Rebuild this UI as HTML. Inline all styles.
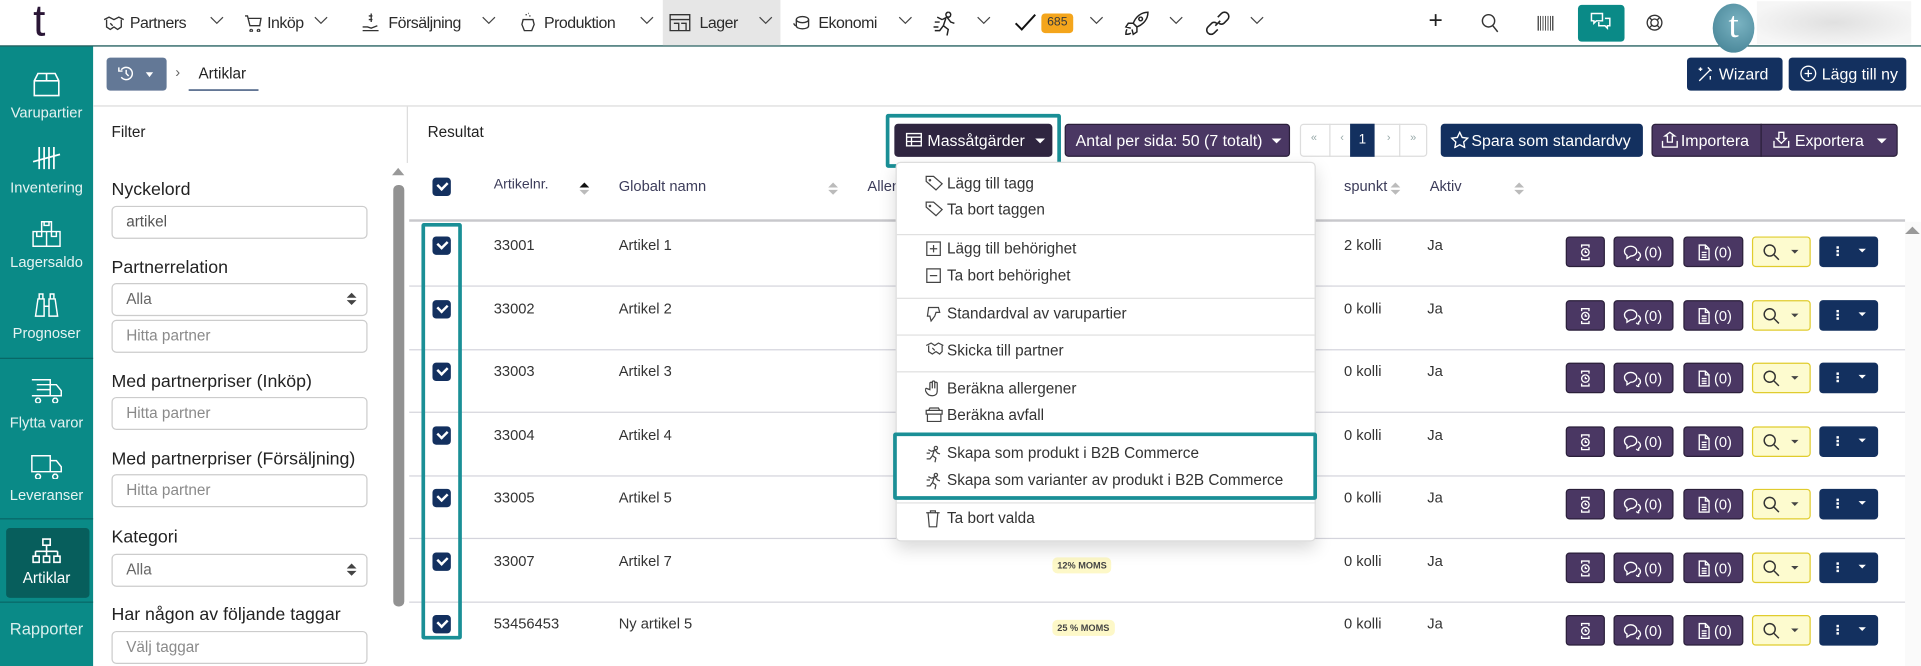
<!DOCTYPE html>
<html><head><meta charset="utf-8">
<style>
html,body{margin:0;padding:0;width:1921px;height:666px;overflow:hidden;background:#fff}
#s{position:absolute;left:0;top:0;width:1568px;height:544px;transform:scale(1.22513);transform-origin:0 0;font-family:"Liberation Sans",sans-serif;color:#333;font-size:12.5px}
.a{position:absolute}
.nav{font-size:13px;color:#2b2b2b;top:11px;letter-spacing:-0.4px}
.chev{position:absolute;top:13px;width:12px;height:8px}
.sb{position:absolute;left:0;width:76px;text-align:center;color:#e6f3f2;font-size:12px}
.lbl{position:absolute;left:91px;font-size:14.5px;color:#222}
.inp{position:absolute;left:91px;width:209px;height:27px;border:1px solid #ccc;border-radius:4px;background:#fff;box-sizing:border-box;padding:5px 11px;color:#8a8a8a;font-size:12.5px}
.cb{position:absolute;width:15px;height:15px;background:#13305f;border-radius:3px}
.cb:after{content:"";position:absolute;left:4px;top:3px;width:6px;height:3.5px;border-left:2px solid #fff;border-bottom:2px solid #fff;transform:rotate(-45deg)}
.row{position:absolute;left:334px;width:1221px;height:52px;border-bottom:1px solid #d4d4dc}
.row .t{position:absolute;top:12px;font-size:12px;color:#333}
.btn{position:absolute;top:12px;height:25px;border-radius:3px;box-sizing:border-box;color:#fff;font-size:12px}
.pb{background:#4a3763;border:1px solid #2a1f3a}
.mi{position:absolute;left:41px;font-size:12.5px;color:#333;white-space:nowrap}
.mi svg{position:absolute;left:-18px;top:0}
.dv{position:absolute;left:0;right:0;height:1px;background:#e0e0e0}
.hd{position:absolute;top:145px;font-size:11.5px;color:#3c3c5a}
.sort{position:absolute;width:8px;height:12px}
.badge{position:absolute;top:16px;background:#fdf8c8;border-radius:4px;font-size:7.5px;font-weight:bold;color:#444;padding:2px 4px}
</style></head><body><div id="s">

<!-- top bar -->
<div class="a" style="left:0;top:0;width:1568px;height:38px;background:#fff;border-bottom:1.5px solid #0e4f4f;box-sizing:border-box"></div>
<div class="a" style="left:27px;top:-4px;font-size:36px;color:#2a1636">t</div>
<div class="a" style="left:541px;top:0;width:96px;height:37px;background:#e6e6e6"></div>

<svg class="a" style="left:84px;top:12px" width="18" height="14" viewBox="0 0 18 14" fill="none" stroke="#333" stroke-width="1.1"><path d="M1 4l4-2 4 2 4-2 4 2M3 4v6l3 2 3-2 3 2 3-2V4M6 7l2 2"/></svg>
<span class="a nav" style="left:106px">Partners</span>
<svg class="chev" style="left:171px" viewBox="0 0 12 8"><path d="M1 1l5 5 5-5" stroke="#444" fill="none"/></svg>
<svg class="a" style="left:199px;top:11px" width="15" height="15" viewBox="0 0 15 15" fill="none" stroke="#333" stroke-width="1.1"><path d="M1 2h2l2 8h8l1-6H4M6 13a1 1 0 1 0 .1 0M12 13a1 1 0 1 0 .1 0"/></svg>
<span class="a nav" style="left:218px">Inköp</span>
<svg class="chev" style="left:256px" viewBox="0 0 12 8"><path d="M1 1l5 5 5-5" stroke="#444" fill="none"/></svg>
<svg class="a" style="left:295px;top:10px" width="16" height="17" viewBox="0 0 16 17" fill="none" stroke="#333" stroke-width="1.1"><path d="M8 1v7M6 3h3M6 6h3M1 12h4l3 1 5-2M1 15h13"/></svg>
<span class="a nav" style="left:317px">Försäljning</span>
<svg class="chev" style="left:393px" viewBox="0 0 12 8"><path d="M1 1l5 5 5-5" stroke="#444" fill="none"/></svg>
<svg class="a" style="left:424px;top:10px" width="14" height="17" viewBox="0 0 14 17" fill="none" stroke="#333" stroke-width="1.1"><path d="M3 6h8l1 4-2 5H4l-2-5zM5 2h1M8 3h1M7 1h0.5"/></svg>
<span class="a nav" style="left:444px">Produktion</span>
<svg class="chev" style="left:522px" viewBox="0 0 12 8"><path d="M1 1l5 5 5-5" stroke="#444" fill="none"/></svg>
<svg class="a" style="left:546px;top:11px" width="18" height="15" viewBox="0 0 18 15" fill="none" stroke="#333" stroke-width="1.1"><path d="M1 1h16v13H1zM1 5h16M4 8h4v6M10 8h4v6"/></svg>
<span class="a nav" style="left:571px">Lager</span>
<svg class="chev" style="left:619px" viewBox="0 0 12 8"><path d="M1 1l5 5 5-5" stroke="#444" fill="none"/></svg>
<svg class="a" style="left:647px;top:12px" width="14" height="13" viewBox="0 0 14 13" fill="none" stroke="#333" stroke-width="1.1"><ellipse cx="8" cy="4" rx="5" ry="2.5"/><path d="M3 4v5c0 1.5 2 2.5 5 2.5s5-1 5-2.5V4M1 7c0 1 1 2 2 2"/></svg>
<span class="a nav" style="left:668px">Ekonomi</span>
<svg class="chev" style="left:733px" viewBox="0 0 12 8"><path d="M1 1l5 5 5-5" stroke="#444" fill="none"/></svg>
<svg class="a" style="left:761px;top:8px" width="22" height="22" viewBox="0 0 22 22" fill="none" stroke="#222" stroke-width="1.2"><path d="M13 2a2 2 0 1 0 .1 0M8 8l4-2 3 4 3 1M11 7l-2 6 4 3-1 5M9 13l-3 4H2M4 6l4 2M2 10h4M1 14h4"/></svg>
<svg class="chev" style="left:797px" viewBox="0 0 12 8"><path d="M1 1l5 5 5-5" stroke="#444" fill="none"/></svg>
<svg class="a" style="left:828px;top:11px" width="18" height="15" viewBox="0 0 18 15"><path d="M1 8l5 5L17 1" stroke="#111" stroke-width="1.6" fill="none"/></svg>
<div class="a" style="left:850px;top:11px;width:26px;height:16px;background:#f4a51c;border-radius:3px;font-size:10px;color:#3a3a3a;text-align:center;line-height:16px">685</div>
<svg class="chev" style="left:889px" viewBox="0 0 12 8"><path d="M1 1l5 5 5-5" stroke="#444" fill="none"/></svg>
<svg class="a" style="left:917px;top:8px" width="22" height="22" viewBox="0 0 22 22" fill="none" stroke="#222" stroke-width="1.2"><path d="M20 2c-6 0-10 4-12 9l3 3c5-2 9-6 9-12zM8 11l-4 0-2 3 4 1M11 14v4l-3 2-1-4M14 6a1.5 1.5 0 1 0 .1 0M3 16c-1 1-1 3-1 4 1 0 3 0 4-1"/></svg>
<svg class="chev" style="left:954px" viewBox="0 0 12 8"><path d="M1 1l5 5 5-5" stroke="#444" fill="none"/></svg>
<svg class="a" style="left:983px;top:8px" width="22" height="22" viewBox="0 0 22 22" fill="none" stroke="#222" stroke-width="1.3"><path d="M9 13l4-4M11 6l3-3a3 3 0 0 1 5 5l-3 3a3 3 0 0 1-4 0M11 16l-3 3a3 3 0 0 1-5-5l3-3a3 3 0 0 1 4 0"/></svg>
<svg class="chev" style="left:1020px" viewBox="0 0 12 8"><path d="M1 1l5 5 5-5" stroke="#444" fill="none"/></svg>

<div class="a" style="left:1166px;top:6px;font-size:20px;color:#222">+</div>
<svg class="a" style="left:1209px;top:11px" width="15" height="16" viewBox="0 0 15 16" fill="none" stroke="#333" stroke-width="1.2"><circle cx="6" cy="6" r="5"/><path d="M9.5 10l4 5"/></svg>
<div class="a" style="left:1255px;top:13px;width:13px;height:12px;background:repeating-linear-gradient(90deg,#555 0 1px,#fff 1px 2px)"></div>
<div class="a" style="left:1288px;top:4px;width:38px;height:30px;background:#0a8a87;border-radius:3px"></div>
<svg class="a" style="left:1297px;top:9px" width="20" height="20" viewBox="0 0 20 20" fill="none" stroke="#fff" stroke-width="1.2"><path d="M2 2h9v6H6l-2 2V8H2zM8 9v3h5l2 2v-2h2V6h-4"/></svg>
<svg class="a" style="left:1343px;top:11px" width="15" height="15" viewBox="0 0 15 15" fill="none" stroke="#333" stroke-width="1.1"><circle cx="7.5" cy="7.5" r="6"/><circle cx="7.5" cy="7.5" r="3"/><path d="M3.3 3.3l2 2M11.7 3.3l-2 2M3.3 11.7l2-2M11.7 11.7l-2-2"/></svg>
<div class="a" style="left:1398px;top:3px;width:34px;height:40px;border-radius:50%;background:radial-gradient(circle at 60% 40%,#7ab3c2,#3f7d90);color:#fff;font-size:30px;text-align:center;line-height:36px;font-family:'Liberation Serif',serif">t</div>
<div class="a" style="left:1434px;top:1px;width:126px;height:35px;background:radial-gradient(ellipse at 50% 50%,#e0e0e0,#f6f6f6 80%)"></div>

<!-- sidebar -->
<div class="a" style="left:0;top:38px;width:76px;height:506px;background:#0a8a87"></div>
<svg class="a" style="left:27px;top:58px" width="22" height="22" viewBox="0 0 22 22" fill="none" stroke="#fff" stroke-width="1.3"><path d="M4 2h14l3 6v12H1V8zM1 8h20M11 2v6"/></svg>
<div class="sb" style="top:85px">Varupartier</div>
<svg class="a" style="left:26px;top:119px" width="24" height="20" viewBox="0 0 24 20" fill="none" stroke="#fff" stroke-width="1.4"><path d="M6 1v18M10 1v18M14 1v18M18 1v18M1 13l22-6"/></svg>
<div class="sb" style="top:146px">Inventering</div>
<svg class="a" style="left:26px;top:180px" width="24" height="22" viewBox="0 0 24 22" fill="none" stroke="#fff" stroke-width="1.2"><path d="M8 1h8v8H8zM1 9h22v12H1zM12 9v12M10 1v3h4V1M4 9v4h4V9M16 9v4h4V9"/></svg>
<div class="sb" style="top:207px">Lagersaldo</div>
<svg class="a" style="left:27px;top:238px" width="22" height="22" viewBox="0 0 22 22" fill="none" stroke="#fff" stroke-width="1.2"><path d="M2 20l2-14h5v14zM13 20V6h5l2 14zM5 6V2h3v4M14 6V2h3v4M9 12h4"/></svg>
<div class="sb" style="top:265px">Prognoser</div>
<div class="a" style="left:0;top:292px;width:76px;height:1px;background:#096766"></div>
<svg class="a" style="left:25px;top:307px" width="26" height="22" viewBox="0 0 26 22" fill="none" stroke="#fff" stroke-width="1.2"><path d="M1 3h15v13H1M5 7h11M5 11h11M16 7h5l4 5v4h-9M6 18a2 2 0 1 0 .1 0M20 18a2 2 0 1 0 .1 0"/></svg>
<div class="sb" style="top:338px">Flytta varor</div>
<svg class="a" style="left:25px;top:369px" width="26" height="22" viewBox="0 0 26 22" fill="none" stroke="#fff" stroke-width="1.2"><path d="M1 3h15v13H1zM16 7h5l4 5v4h-9M6 18a2 2 0 1 0 .1 0M20 18a2 2 0 1 0 .1 0"/></svg>
<div class="sb" style="top:397px">Leveranser</div>
<div class="a" style="left:0;top:423px;width:76px;height:1px;background:#096766"></div>
<div class="a" style="left:5px;top:431px;width:68px;height:57px;background:#075e5c;border-radius:3px"></div>
<svg class="a" style="left:26px;top:439px" width="24" height="22" viewBox="0 0 24 22" fill="none" stroke="#fff" stroke-width="1.3"><path d="M9 1h6v5H9zM12 6v5M3 11h18M3 11v4M12 11v4M21 11v4M1 15h5v5H1zM9.5 15h5v5h-5zM18 15h5v5h-5z"/></svg>
<div class="sb" style="top:465px;color:#fff;font-size:12.5px">Artiklar</div>
<div class="a" style="left:0;top:491px;width:76px;height:1px;background:#096766"></div>
<div class="sb" style="top:506px;font-size:13.5px;color:#d9efed">Rapporter</div>

<!-- breadcrumb row -->
<div class="a" style="left:87px;top:47px;width:49px;height:27px;background:#637896;border-radius:3px"></div>
<svg class="a" style="left:96px;top:53px" width="14" height="14" viewBox="0 0 14 14" fill="none" stroke="#fff" stroke-width="1.2"><path d="M3 4a5 5 0 1 1 0 6M1 2v3h3M7 4v3l2 2"/></svg>
<div class="a" style="left:119px;top:59px;border:3px solid transparent;border-top:4px solid #fff"></div>
<div class="a" style="left:143px;top:52px;color:#666;font-size:12px">›</div>
<div class="a" style="left:162px;top:53px;font-size:12.5px;color:#222">Artiklar</div>
<div class="a" style="left:154px;top:73px;width:57px;height:1px;background:#13305f"></div>
<div class="a" style="left:1377px;top:47px;width:78px;height:27px;background:#13305f;border-radius:3px;color:#fff;font-size:13px;line-height:27px"><span style="position:absolute;left:26px">Wizard</span></div>
<svg class="a" style="left:1385px;top:53px" width="14" height="14" viewBox="0 0 14 14" fill="none" stroke="#fff" stroke-width="1.1"><path d="M2 13L11 4M9 2l3 3M3 2v3M1.5 3.5h3M11 9v3"/></svg>
<div class="a" style="left:1460px;top:47px;width:96px;height:27px;background:#13305f;border-radius:3px;color:#fff;font-size:13px;line-height:27px"><span style="margin-left:27px">Lägg till ny</span></div>
<svg class="a" style="left:1469px;top:53px" width="14" height="14" viewBox="0 0 14 14" fill="none" stroke="#fff" stroke-width="1.1"><circle cx="7" cy="7" r="6"/><path d="M7 4v6M4 7h6"/></svg>
<div class="a" style="left:76px;top:86px;width:1492px;height:1px;background:#dcdcdc"></div>

<!-- filter -->
<div class="a" style="left:332px;top:87px;width:1px;height:46px;background:#dcdcdc"></div>
<div class="a" style="left:91px;top:101px;font-size:12.5px;color:#222">Filter</div>
<div class="a" style="left:320px;top:137px;border:5px solid transparent;border-bottom:6px solid #999;border-top:0"></div>
<div class="a" style="left:321px;top:151px;width:9px;height:344px;background:#929292;border-radius:4px"></div>
<div class="lbl" style="top:147px">Nyckelord</div>
<div class="inp" style="top:168px;color:#555">artikel</div>
<div class="lbl" style="top:211px">Partnerrelation</div>
<div class="inp" style="top:231px;color:#666">Alla</div>
<svg class="a" style="left:283px;top:238px" width="8" height="12" viewBox="0 0 8 12"><path d="M0 5l4-4 4 4zM0 7l4 4 4-4z" fill="#444"/></svg>
<div class="inp" style="top:261px">Hitta partner</div>
<div class="lbl" style="top:304px">Med partnerpriser (Inköp)</div>
<div class="inp" style="top:324px">Hitta partner</div>
<div class="lbl" style="top:367px">Med partnerpriser (Försäljning)</div>
<div class="inp" style="top:387px">Hitta partner</div>
<div class="lbl" style="top:431px">Kategori</div>
<div class="inp" style="top:452px;color:#666">Alla</div>
<svg class="a" style="left:283px;top:459px" width="8" height="12" viewBox="0 0 8 12"><path d="M0 5l4-4 4 4zM0 7l4 4 4-4z" fill="#444"/></svg>
<div class="lbl" style="top:494px">Har någon av följande taggar</div>
<div class="inp" style="top:515px">Välj taggar</div>

<!-- results header -->
<div class="a" style="left:349px;top:101px;font-size:12.5px;color:#222">Resultat</div>
<div class="a" style="left:869px;top:101px;width:184px;height:27px;background:#4a3763;border:1px solid #2a1f3a;box-sizing:border-box;border-radius:3px;color:#fff;font-size:13px;line-height:25px"><span style="margin-left:8px">Antal per sida: 50 (7 totalt)</span></div>
<div class="a" style="left:1038px;top:113px;border:4px solid transparent;border-top:4px solid #fff"></div>
<div class="a" style="left:1061px;top:101px;width:104px;height:27px;border:1px solid #ddd;border-radius:3px;box-sizing:border-box"></div>
<div class="a" style="left:1070px;top:107px;font-size:9px;color:#9aa">«</div>
<div class="a" style="left:1085px;top:101px;width:1px;height:27px;background:#ddd"></div>
<div class="a" style="left:1094px;top:107px;font-size:9px;color:#9aa">‹</div>
<div class="a" style="left:1102px;top:101px;width:20px;height:27px;background:#13305f;color:#fff;font-size:11px;text-align:center;line-height:27px">1</div>
<div class="a" style="left:1132px;top:107px;font-size:9px;color:#9aa">›</div>
<div class="a" style="left:1142px;top:101px;width:1px;height:27px;background:#ddd"></div>
<div class="a" style="left:1151px;top:107px;font-size:9px;color:#9aa">»</div>
<div class="a" style="left:1176px;top:101px;width:165px;height:27px;background:#13305f;border-radius:3px;color:#fff;font-size:13px;line-height:27px"><span style="margin-left:25px">Spara som standardvy</span></div>
<svg class="a" style="left:1184px;top:107px" width="15" height="14" viewBox="0 0 15 14" fill="none" stroke="#fff" stroke-width="1.1"><path d="M7.5 1l2 4.2 4.5.6-3.3 3.1.8 4.5-4-2.2-4 2.2.8-4.5L1 5.8l4.5-.6z"/></svg>
<div class="a" style="left:1348px;top:101px;width:201px;height:27px;background:#4a3763;border:1px solid #2a1f3a;box-sizing:border-box;border-radius:3px;color:#fff;font-size:13px;line-height:25px"><span style="position:absolute;left:23px">Importera</span><span style="position:absolute;left:116px">Exportera</span></div>
<div class="a" style="left:1437px;top:101px;width:1px;height:27px;background:#2a1f3a"></div>
<svg class="a" style="left:1356px;top:107px" width="14" height="14" viewBox="0 0 14 14" fill="none" stroke="#fff" stroke-width="1.1"><path d="M5 9V4H3l4-3 4 3H9v5zM1 8v5h12V8"/></svg>
<svg class="a" style="left:1447px;top:107px" width="14" height="14" viewBox="0 0 14 14" fill="none" stroke="#fff" stroke-width="1.1"><path d="M5 1v5H3l4 4 4-4H9V1zM1 8v5h12V8"/></svg>
<div class="a" style="left:1532px;top:113px;border:4px solid transparent;border-top:4px solid #fff"></div>

<!-- table header -->
<div class="cb" style="left:353px;top:145px"></div>
<div class="hd" style="left:403px">Artikelnr.</div>
<svg class="sort" style="left:473px;top:148px" viewBox="0 0 8 12"><path d="M0 5l4-4 4 4z" fill="#111"/><path d="M0 7l4 4 4-4z" fill="#bbb"/></svg>
<div class="hd" style="left:505px;font-size:12px">Globalt namn</div>
<svg class="sort" style="left:676px;top:148px" viewBox="0 0 8 12"><path d="M0 5l4-4 4 4zM0 7l4 4 4-4z" fill="#bbb"/></svg>
<div class="hd" style="left:708px;font-size:12px">Aller</div>
<div class="hd" style="left:1097px;font-size:12px">spunkt</div>
<svg class="sort" style="left:1135px;top:148px" viewBox="0 0 8 12"><path d="M0 5l4-4 4 4zM0 7l4 4 4-4z" fill="#bbb"/></svg>
<div class="hd" style="left:1167px;font-size:12px">Aktiv</div>
<svg class="sort" style="left:1236px;top:148px" viewBox="0 0 8 12"><path d="M0 5l4-4 4 4zM0 7l4 4 4-4z" fill="#bbb"/></svg>
<div class="a" style="left:334px;top:179px;width:1221px;height:2px;background:#c8c8cc"></div>
<div class="a" style="left:1555px;top:181px;width:13px;height:363px;background:#fafafa"></div>
<div class="a" style="left:1555px;top:185px;border:6px solid transparent;border-bottom:6px solid #999;border-top:0"></div>

<!-- rows -->
<div class="row" style="top:181px"><div class="cb" style="left:19px;top:12px"></div><div class="t" style="left:69px">33001</div><div class="t" style="left:171px">Artikel 1</div><div class="t" style="left:763px">2 kolli</div><div class="t" style="left:831px">Ja</div>
<div class="btn pb" style="left:944px;width:32px"><svg style="position:absolute;left:9px;top:5px" width="12" height="14" viewBox="0 0 12 14" fill="none" stroke="#fff" stroke-width="1.1"><path d="M3 3V1h6v2M3 11v2h6v-2M6 4a3 3 0 1 0 .1 0M6 5.5V7h1.5"/></svg></div>
<div class="btn pb" style="left:983px;width:49px"><span style="position:absolute;left:24px;top:5px">(0)</span><svg style="position:absolute;left:7px;top:6px" width="15" height="13" viewBox="0 0 15 13" fill="none" stroke="#fff" stroke-width="1.1"><path d="M1 5c0-2 2-4 5-4s5 2 5 4-2 4-5 4L3 11V8.5C1.8 7.8 1 6.5 1 5zM12 5.5c1.3.8 2 1.8 2 3 0 1-.5 2-1.5 2.5V13l-2-1.5"/></svg></div>
<div class="btn pb" style="left:1040px;width:49px"><span style="position:absolute;left:24px;top:5px">(0)</span><svg style="position:absolute;left:11px;top:5px" width="10" height="14" viewBox="0 0 10 14" fill="none" stroke="#fff" stroke-width="1.1"><path d="M1 1h5l3 3v9H1zM6 1v3h3M3 7h4M3 9h4M3 11h4"/></svg></div>
<div class="btn" style="left:1096px;width:48px;background:#fdfbcf;border:1px solid #e0cc2e"><svg style="position:absolute;left:8px;top:5px" width="14" height="14" viewBox="0 0 14 14" fill="none" stroke="#333" stroke-width="1.2"><circle cx="5.5" cy="5.5" r="4.5"/><path d="M9 9l4 4"/></svg><div style="position:absolute;left:31px;top:10px;border:3.5px solid transparent;border-top:3.5px solid #444"></div></div>
<div class="btn" style="left:1151px;width:48px;background:#13305f"><div style="position:absolute;left:14px;top:8px;width:2px;height:2px;background:#fff;box-shadow:0 3px #fff,0 6px #fff"></div><div style="position:absolute;left:32px;top:10px;border:3.5px solid transparent;border-top:3.5px solid #fff"></div></div></div>

<div class="row" style="top:232.5px"><div class="cb" style="left:19px;top:12px"></div><div class="t" style="left:69px">33002</div><div class="t" style="left:171px">Artikel 2</div><div class="t" style="left:763px">0 kolli</div><div class="t" style="left:831px">Ja</div>
<div class="btn pb" style="left:944px;width:32px"><svg style="position:absolute;left:9px;top:5px" width="12" height="14" viewBox="0 0 12 14" fill="none" stroke="#fff" stroke-width="1.1"><path d="M3 3V1h6v2M3 11v2h6v-2M6 4a3 3 0 1 0 .1 0M6 5.5V7h1.5"/></svg></div>
<div class="btn pb" style="left:983px;width:49px"><span style="position:absolute;left:24px;top:5px">(0)</span><svg style="position:absolute;left:7px;top:6px" width="15" height="13" viewBox="0 0 15 13" fill="none" stroke="#fff" stroke-width="1.1"><path d="M1 5c0-2 2-4 5-4s5 2 5 4-2 4-5 4L3 11V8.5C1.8 7.8 1 6.5 1 5zM12 5.5c1.3.8 2 1.8 2 3 0 1-.5 2-1.5 2.5V13l-2-1.5"/></svg></div>
<div class="btn pb" style="left:1040px;width:49px"><span style="position:absolute;left:24px;top:5px">(0)</span><svg style="position:absolute;left:11px;top:5px" width="10" height="14" viewBox="0 0 10 14" fill="none" stroke="#fff" stroke-width="1.1"><path d="M1 1h5l3 3v9H1zM6 1v3h3M3 7h4M3 9h4M3 11h4"/></svg></div>
<div class="btn" style="left:1096px;width:48px;background:#fdfbcf;border:1px solid #e0cc2e"><svg style="position:absolute;left:8px;top:5px" width="14" height="14" viewBox="0 0 14 14" fill="none" stroke="#333" stroke-width="1.2"><circle cx="5.5" cy="5.5" r="4.5"/><path d="M9 9l4 4"/></svg><div style="position:absolute;left:31px;top:10px;border:3.5px solid transparent;border-top:3.5px solid #444"></div></div>
<div class="btn" style="left:1151px;width:48px;background:#13305f"><div style="position:absolute;left:14px;top:8px;width:2px;height:2px;background:#fff;box-shadow:0 3px #fff,0 6px #fff"></div><div style="position:absolute;left:32px;top:10px;border:3.5px solid transparent;border-top:3.5px solid #fff"></div></div></div>

<div class="row" style="top:284px"><div class="cb" style="left:19px;top:12px"></div><div class="t" style="left:69px">33003</div><div class="t" style="left:171px">Artikel 3</div><div class="t" style="left:763px">0 kolli</div><div class="t" style="left:831px">Ja</div>
<div class="btn pb" style="left:944px;width:32px"><svg style="position:absolute;left:9px;top:5px" width="12" height="14" viewBox="0 0 12 14" fill="none" stroke="#fff" stroke-width="1.1"><path d="M3 3V1h6v2M3 11v2h6v-2M6 4a3 3 0 1 0 .1 0M6 5.5V7h1.5"/></svg></div>
<div class="btn pb" style="left:983px;width:49px"><span style="position:absolute;left:24px;top:5px">(0)</span><svg style="position:absolute;left:7px;top:6px" width="15" height="13" viewBox="0 0 15 13" fill="none" stroke="#fff" stroke-width="1.1"><path d="M1 5c0-2 2-4 5-4s5 2 5 4-2 4-5 4L3 11V8.5C1.8 7.8 1 6.5 1 5zM12 5.5c1.3.8 2 1.8 2 3 0 1-.5 2-1.5 2.5V13l-2-1.5"/></svg></div>
<div class="btn pb" style="left:1040px;width:49px"><span style="position:absolute;left:24px;top:5px">(0)</span><svg style="position:absolute;left:11px;top:5px" width="10" height="14" viewBox="0 0 10 14" fill="none" stroke="#fff" stroke-width="1.1"><path d="M1 1h5l3 3v9H1zM6 1v3h3M3 7h4M3 9h4M3 11h4"/></svg></div>
<div class="btn" style="left:1096px;width:48px;background:#fdfbcf;border:1px solid #e0cc2e"><svg style="position:absolute;left:8px;top:5px" width="14" height="14" viewBox="0 0 14 14" fill="none" stroke="#333" stroke-width="1.2"><circle cx="5.5" cy="5.5" r="4.5"/><path d="M9 9l4 4"/></svg><div style="position:absolute;left:31px;top:10px;border:3.5px solid transparent;border-top:3.5px solid #444"></div></div>
<div class="btn" style="left:1151px;width:48px;background:#13305f"><div style="position:absolute;left:14px;top:8px;width:2px;height:2px;background:#fff;box-shadow:0 3px #fff,0 6px #fff"></div><div style="position:absolute;left:32px;top:10px;border:3.5px solid transparent;border-top:3.5px solid #fff"></div></div></div>

<div class="row" style="top:335.5px"><div class="cb" style="left:19px;top:12px"></div><div class="t" style="left:69px">33004</div><div class="t" style="left:171px">Artikel 4</div><div class="t" style="left:763px">0 kolli</div><div class="t" style="left:831px">Ja</div>
<div class="btn pb" style="left:944px;width:32px"><svg style="position:absolute;left:9px;top:5px" width="12" height="14" viewBox="0 0 12 14" fill="none" stroke="#fff" stroke-width="1.1"><path d="M3 3V1h6v2M3 11v2h6v-2M6 4a3 3 0 1 0 .1 0M6 5.5V7h1.5"/></svg></div>
<div class="btn pb" style="left:983px;width:49px"><span style="position:absolute;left:24px;top:5px">(0)</span><svg style="position:absolute;left:7px;top:6px" width="15" height="13" viewBox="0 0 15 13" fill="none" stroke="#fff" stroke-width="1.1"><path d="M1 5c0-2 2-4 5-4s5 2 5 4-2 4-5 4L3 11V8.5C1.8 7.8 1 6.5 1 5zM12 5.5c1.3.8 2 1.8 2 3 0 1-.5 2-1.5 2.5V13l-2-1.5"/></svg></div>
<div class="btn pb" style="left:1040px;width:49px"><span style="position:absolute;left:24px;top:5px">(0)</span><svg style="position:absolute;left:11px;top:5px" width="10" height="14" viewBox="0 0 10 14" fill="none" stroke="#fff" stroke-width="1.1"><path d="M1 1h5l3 3v9H1zM6 1v3h3M3 7h4M3 9h4M3 11h4"/></svg></div>
<div class="btn" style="left:1096px;width:48px;background:#fdfbcf;border:1px solid #e0cc2e"><svg style="position:absolute;left:8px;top:5px" width="14" height="14" viewBox="0 0 14 14" fill="none" stroke="#333" stroke-width="1.2"><circle cx="5.5" cy="5.5" r="4.5"/><path d="M9 9l4 4"/></svg><div style="position:absolute;left:31px;top:10px;border:3.5px solid transparent;border-top:3.5px solid #444"></div></div>
<div class="btn" style="left:1151px;width:48px;background:#13305f"><div style="position:absolute;left:14px;top:8px;width:2px;height:2px;background:#fff;box-shadow:0 3px #fff,0 6px #fff"></div><div style="position:absolute;left:32px;top:10px;border:3.5px solid transparent;border-top:3.5px solid #fff"></div></div></div>

<div class="row" style="top:387px"><div class="cb" style="left:19px;top:12px"></div><div class="t" style="left:69px">33005</div><div class="t" style="left:171px">Artikel 5</div><div class="t" style="left:763px">0 kolli</div><div class="t" style="left:831px">Ja</div>
<div class="btn pb" style="left:944px;width:32px"><svg style="position:absolute;left:9px;top:5px" width="12" height="14" viewBox="0 0 12 14" fill="none" stroke="#fff" stroke-width="1.1"><path d="M3 3V1h6v2M3 11v2h6v-2M6 4a3 3 0 1 0 .1 0M6 5.5V7h1.5"/></svg></div>
<div class="btn pb" style="left:983px;width:49px"><span style="position:absolute;left:24px;top:5px">(0)</span><svg style="position:absolute;left:7px;top:6px" width="15" height="13" viewBox="0 0 15 13" fill="none" stroke="#fff" stroke-width="1.1"><path d="M1 5c0-2 2-4 5-4s5 2 5 4-2 4-5 4L3 11V8.5C1.8 7.8 1 6.5 1 5zM12 5.5c1.3.8 2 1.8 2 3 0 1-.5 2-1.5 2.5V13l-2-1.5"/></svg></div>
<div class="btn pb" style="left:1040px;width:49px"><span style="position:absolute;left:24px;top:5px">(0)</span><svg style="position:absolute;left:11px;top:5px" width="10" height="14" viewBox="0 0 10 14" fill="none" stroke="#fff" stroke-width="1.1"><path d="M1 1h5l3 3v9H1zM6 1v3h3M3 7h4M3 9h4M3 11h4"/></svg></div>
<div class="btn" style="left:1096px;width:48px;background:#fdfbcf;border:1px solid #e0cc2e"><svg style="position:absolute;left:8px;top:5px" width="14" height="14" viewBox="0 0 14 14" fill="none" stroke="#333" stroke-width="1.2"><circle cx="5.5" cy="5.5" r="4.5"/><path d="M9 9l4 4"/></svg><div style="position:absolute;left:31px;top:10px;border:3.5px solid transparent;border-top:3.5px solid #444"></div></div>
<div class="btn" style="left:1151px;width:48px;background:#13305f"><div style="position:absolute;left:14px;top:8px;width:2px;height:2px;background:#fff;box-shadow:0 3px #fff,0 6px #fff"></div><div style="position:absolute;left:32px;top:10px;border:3.5px solid transparent;border-top:3.5px solid #fff"></div></div></div>

<div class="row" style="top:438.5px"><div class="cb" style="left:19px;top:12px"></div><div class="t" style="left:69px">33007</div><div class="t" style="left:171px">Artikel 7</div><div class="badge" style="left:525px">12% MOMS</div><div class="t" style="left:763px">0 kolli</div><div class="t" style="left:831px">Ja</div>
<div class="btn pb" style="left:944px;width:32px"><svg style="position:absolute;left:9px;top:5px" width="12" height="14" viewBox="0 0 12 14" fill="none" stroke="#fff" stroke-width="1.1"><path d="M3 3V1h6v2M3 11v2h6v-2M6 4a3 3 0 1 0 .1 0M6 5.5V7h1.5"/></svg></div>
<div class="btn pb" style="left:983px;width:49px"><span style="position:absolute;left:24px;top:5px">(0)</span><svg style="position:absolute;left:7px;top:6px" width="15" height="13" viewBox="0 0 15 13" fill="none" stroke="#fff" stroke-width="1.1"><path d="M1 5c0-2 2-4 5-4s5 2 5 4-2 4-5 4L3 11V8.5C1.8 7.8 1 6.5 1 5zM12 5.5c1.3.8 2 1.8 2 3 0 1-.5 2-1.5 2.5V13l-2-1.5"/></svg></div>
<div class="btn pb" style="left:1040px;width:49px"><span style="position:absolute;left:24px;top:5px">(0)</span><svg style="position:absolute;left:11px;top:5px" width="10" height="14" viewBox="0 0 10 14" fill="none" stroke="#fff" stroke-width="1.1"><path d="M1 1h5l3 3v9H1zM6 1v3h3M3 7h4M3 9h4M3 11h4"/></svg></div>
<div class="btn" style="left:1096px;width:48px;background:#fdfbcf;border:1px solid #e0cc2e"><svg style="position:absolute;left:8px;top:5px" width="14" height="14" viewBox="0 0 14 14" fill="none" stroke="#333" stroke-width="1.2"><circle cx="5.5" cy="5.5" r="4.5"/><path d="M9 9l4 4"/></svg><div style="position:absolute;left:31px;top:10px;border:3.5px solid transparent;border-top:3.5px solid #444"></div></div>
<div class="btn" style="left:1151px;width:48px;background:#13305f"><div style="position:absolute;left:14px;top:8px;width:2px;height:2px;background:#fff;box-shadow:0 3px #fff,0 6px #fff"></div><div style="position:absolute;left:32px;top:10px;border:3.5px solid transparent;border-top:3.5px solid #fff"></div></div></div>

<div class="row" style="top:490px;border-bottom:0"><div class="cb" style="left:19px;top:12px"></div><div class="t" style="left:69px">53456453</div><div class="t" style="left:171px">Ny artikel 5</div><div class="badge" style="left:525px">25 % MOMS</div><div class="t" style="left:763px">0 kolli</div><div class="t" style="left:831px">Ja</div>
<div class="btn pb" style="left:944px;width:32px"><svg style="position:absolute;left:9px;top:5px" width="12" height="14" viewBox="0 0 12 14" fill="none" stroke="#fff" stroke-width="1.1"><path d="M3 3V1h6v2M3 11v2h6v-2M6 4a3 3 0 1 0 .1 0M6 5.5V7h1.5"/></svg></div>
<div class="btn pb" style="left:983px;width:49px"><span style="position:absolute;left:24px;top:5px">(0)</span><svg style="position:absolute;left:7px;top:6px" width="15" height="13" viewBox="0 0 15 13" fill="none" stroke="#fff" stroke-width="1.1"><path d="M1 5c0-2 2-4 5-4s5 2 5 4-2 4-5 4L3 11V8.5C1.8 7.8 1 6.5 1 5zM12 5.5c1.3.8 2 1.8 2 3 0 1-.5 2-1.5 2.5V13l-2-1.5"/></svg></div>
<div class="btn pb" style="left:1040px;width:49px"><span style="position:absolute;left:24px;top:5px">(0)</span><svg style="position:absolute;left:11px;top:5px" width="10" height="14" viewBox="0 0 10 14" fill="none" stroke="#fff" stroke-width="1.1"><path d="M1 1h5l3 3v9H1zM6 1v3h3M3 7h4M3 9h4M3 11h4"/></svg></div>
<div class="btn" style="left:1096px;width:48px;background:#fdfbcf;border:1px solid #e0cc2e"><svg style="position:absolute;left:8px;top:5px" width="14" height="14" viewBox="0 0 14 14" fill="none" stroke="#333" stroke-width="1.2"><circle cx="5.5" cy="5.5" r="4.5"/><path d="M9 9l4 4"/></svg><div style="position:absolute;left:31px;top:10px;border:3.5px solid transparent;border-top:3.5px solid #444"></div></div>
<div class="btn" style="left:1151px;width:48px;background:#13305f"><div style="position:absolute;left:14px;top:8px;width:2px;height:2px;background:#fff;box-shadow:0 3px #fff,0 6px #fff"></div><div style="position:absolute;left:32px;top:10px;border:3.5px solid transparent;border-top:3.5px solid #fff"></div></div></div>

<!-- checkbox highlight -->
<div class="a" style="left:344px;top:182px;width:33px;height:340px;border:3px solid #1a8f96;box-sizing:border-box;border-radius:2px"></div>

<!-- massåtgärder button -->
<div class="a" style="left:723px;top:93px;width:143px;height:44px;border:3px solid #1a8f96;box-sizing:border-box;border-radius:2px"></div>
<div class="a" style="left:730px;top:101px;width:129px;height:27px;background:#2f2540;border-radius:3px;color:#fff;font-size:13px;line-height:27px"><span style="margin-left:27px">Massåtgärder</span></div>
<svg class="a" style="left:739px;top:108px" width="14" height="12" viewBox="0 0 14 12" fill="none" stroke="#fff" stroke-width="1.1"><path d="M1 1h12v10H1zM1 4h12M1 7.5h12M5 4v7"/></svg>
<div class="a" style="left:845px;top:113px;border:4px solid transparent;border-top:4px solid #fff"></div>

<!-- dropdown menu -->
<div class="a" style="left:731px;top:132px;width:343px;height:310px;background:#fff;border:1px solid #ddd;border-radius:4px;box-sizing:border-box;box-shadow:0 6px 14px rgba(0,0,0,.15)">
<div class="mi" style="top:10px"><svg width="15" height="13" viewBox="0 0 15 13" fill="none" stroke="#444" stroke-width="1"><path d="M1 1h6l7 6-5 5-8-7zM4 3.5a.6.6 0 1 0 .1 0"/></svg>Lägg till tagg</div>
<div class="mi" style="top:31px"><svg width="15" height="13" viewBox="0 0 15 13" fill="none" stroke="#444" stroke-width="1"><path d="M1 1h6l7 6-5 5-8-7zM4 3.5a.6.6 0 1 0 .1 0"/></svg>Ta bort taggen</div>
<div class="dv" style="top:58px"></div>
<div class="mi" style="top:63px"><svg width="14" height="14" viewBox="0 0 14 14" fill="none" stroke="#444" stroke-width="1"><path d="M1.5 1.5h11v11h-11zM7 4v6M4 7h6"/></svg>Lägg till behörighet</div>
<div class="mi" style="top:85px"><svg width="14" height="14" viewBox="0 0 14 14" fill="none" stroke="#444" stroke-width="1"><path d="M1.5 1.5h11v11h-11zM4 7h6"/></svg>Ta bort behörighet</div>
<div class="dv" style="top:110px"></div>
<div class="mi" style="top:116px"><svg width="14" height="14" viewBox="0 0 14 14" fill="none" stroke="#444" stroke-width="1"><path d="M3 2h8l1 4H9l-1 3-3 4-1-4H2z"/></svg>Standardval av varupartier</div>
<div class="dv" style="top:140px"></div>
<div class="mi" style="top:146px"><svg width="16" height="12" viewBox="0 0 16 12" fill="none" stroke="#444" stroke-width="1"><path d="M1 3l4-2 3 2 3-2 4 2M3 3v5l3 2 3-2 3 2 2-2V3M6 5l2 2"/></svg>Skicka till partner</div>
<div class="dv" style="top:170px"></div>
<div class="mi" style="top:177px"><svg width="14" height="14" viewBox="0 0 14 14" fill="none" stroke="#444" stroke-width="1"><path d="M4 8V3a1 1 0 0 1 2 0v4V2a1 1 0 0 1 2 0v5V3a1 1 0 0 1 2 0v6c0 3-2 4-4 4s-4-1-5-3l-1-2 1-1z"/></svg>Beräkna allergener</div>
<div class="mi" style="top:199px"><svg width="15" height="13" viewBox="0 0 15 13" fill="none" stroke="#444" stroke-width="1"><path d="M1 3h13v3H1zM2 6v6h11V6M3 3l1-2h7l1 2"/></svg>Beräkna avfall</div>
<div class="mi" style="top:230px"><svg width="15" height="15" viewBox="0 0 22 22" fill="none" stroke="#444" stroke-width="1.5"><path d="M13 2a2 2 0 1 0 .1 0M8 8l4-2 3 4 3 1M11 7l-2 6 4 3-1 5M9 13l-3 4H2M4 6l4 2M2 10h4"/></svg>Skapa som produkt i B2B Commerce</div>
<div class="mi" style="top:252px"><svg width="15" height="15" viewBox="0 0 22 22" fill="none" stroke="#444" stroke-width="1.5"><path d="M13 2a2 2 0 1 0 .1 0M8 8l4-2 3 4 3 1M11 7l-2 6 4 3-1 5M9 13l-3 4H2M4 6l4 2M2 10h4"/></svg>Skapa som varianter av produkt i B2B Commerce</div>
<div class="dv" style="top:277px"></div>
<div class="mi" style="top:283px"><svg width="13" height="15" viewBox="0 0 13 15" fill="none" stroke="#444" stroke-width="1"><path d="M1 2.5h11M4.5 2.5V1h4v1.5M2.5 2.5l1 11.5h6l1-11.5"/></svg>Ta bort valda</div>
</div>
<div class="a" style="left:729px;top:353px;width:346px;height:55px;border:3px solid #1a8f96;box-sizing:border-box;border-radius:2px"></div>

</div></body></html>
